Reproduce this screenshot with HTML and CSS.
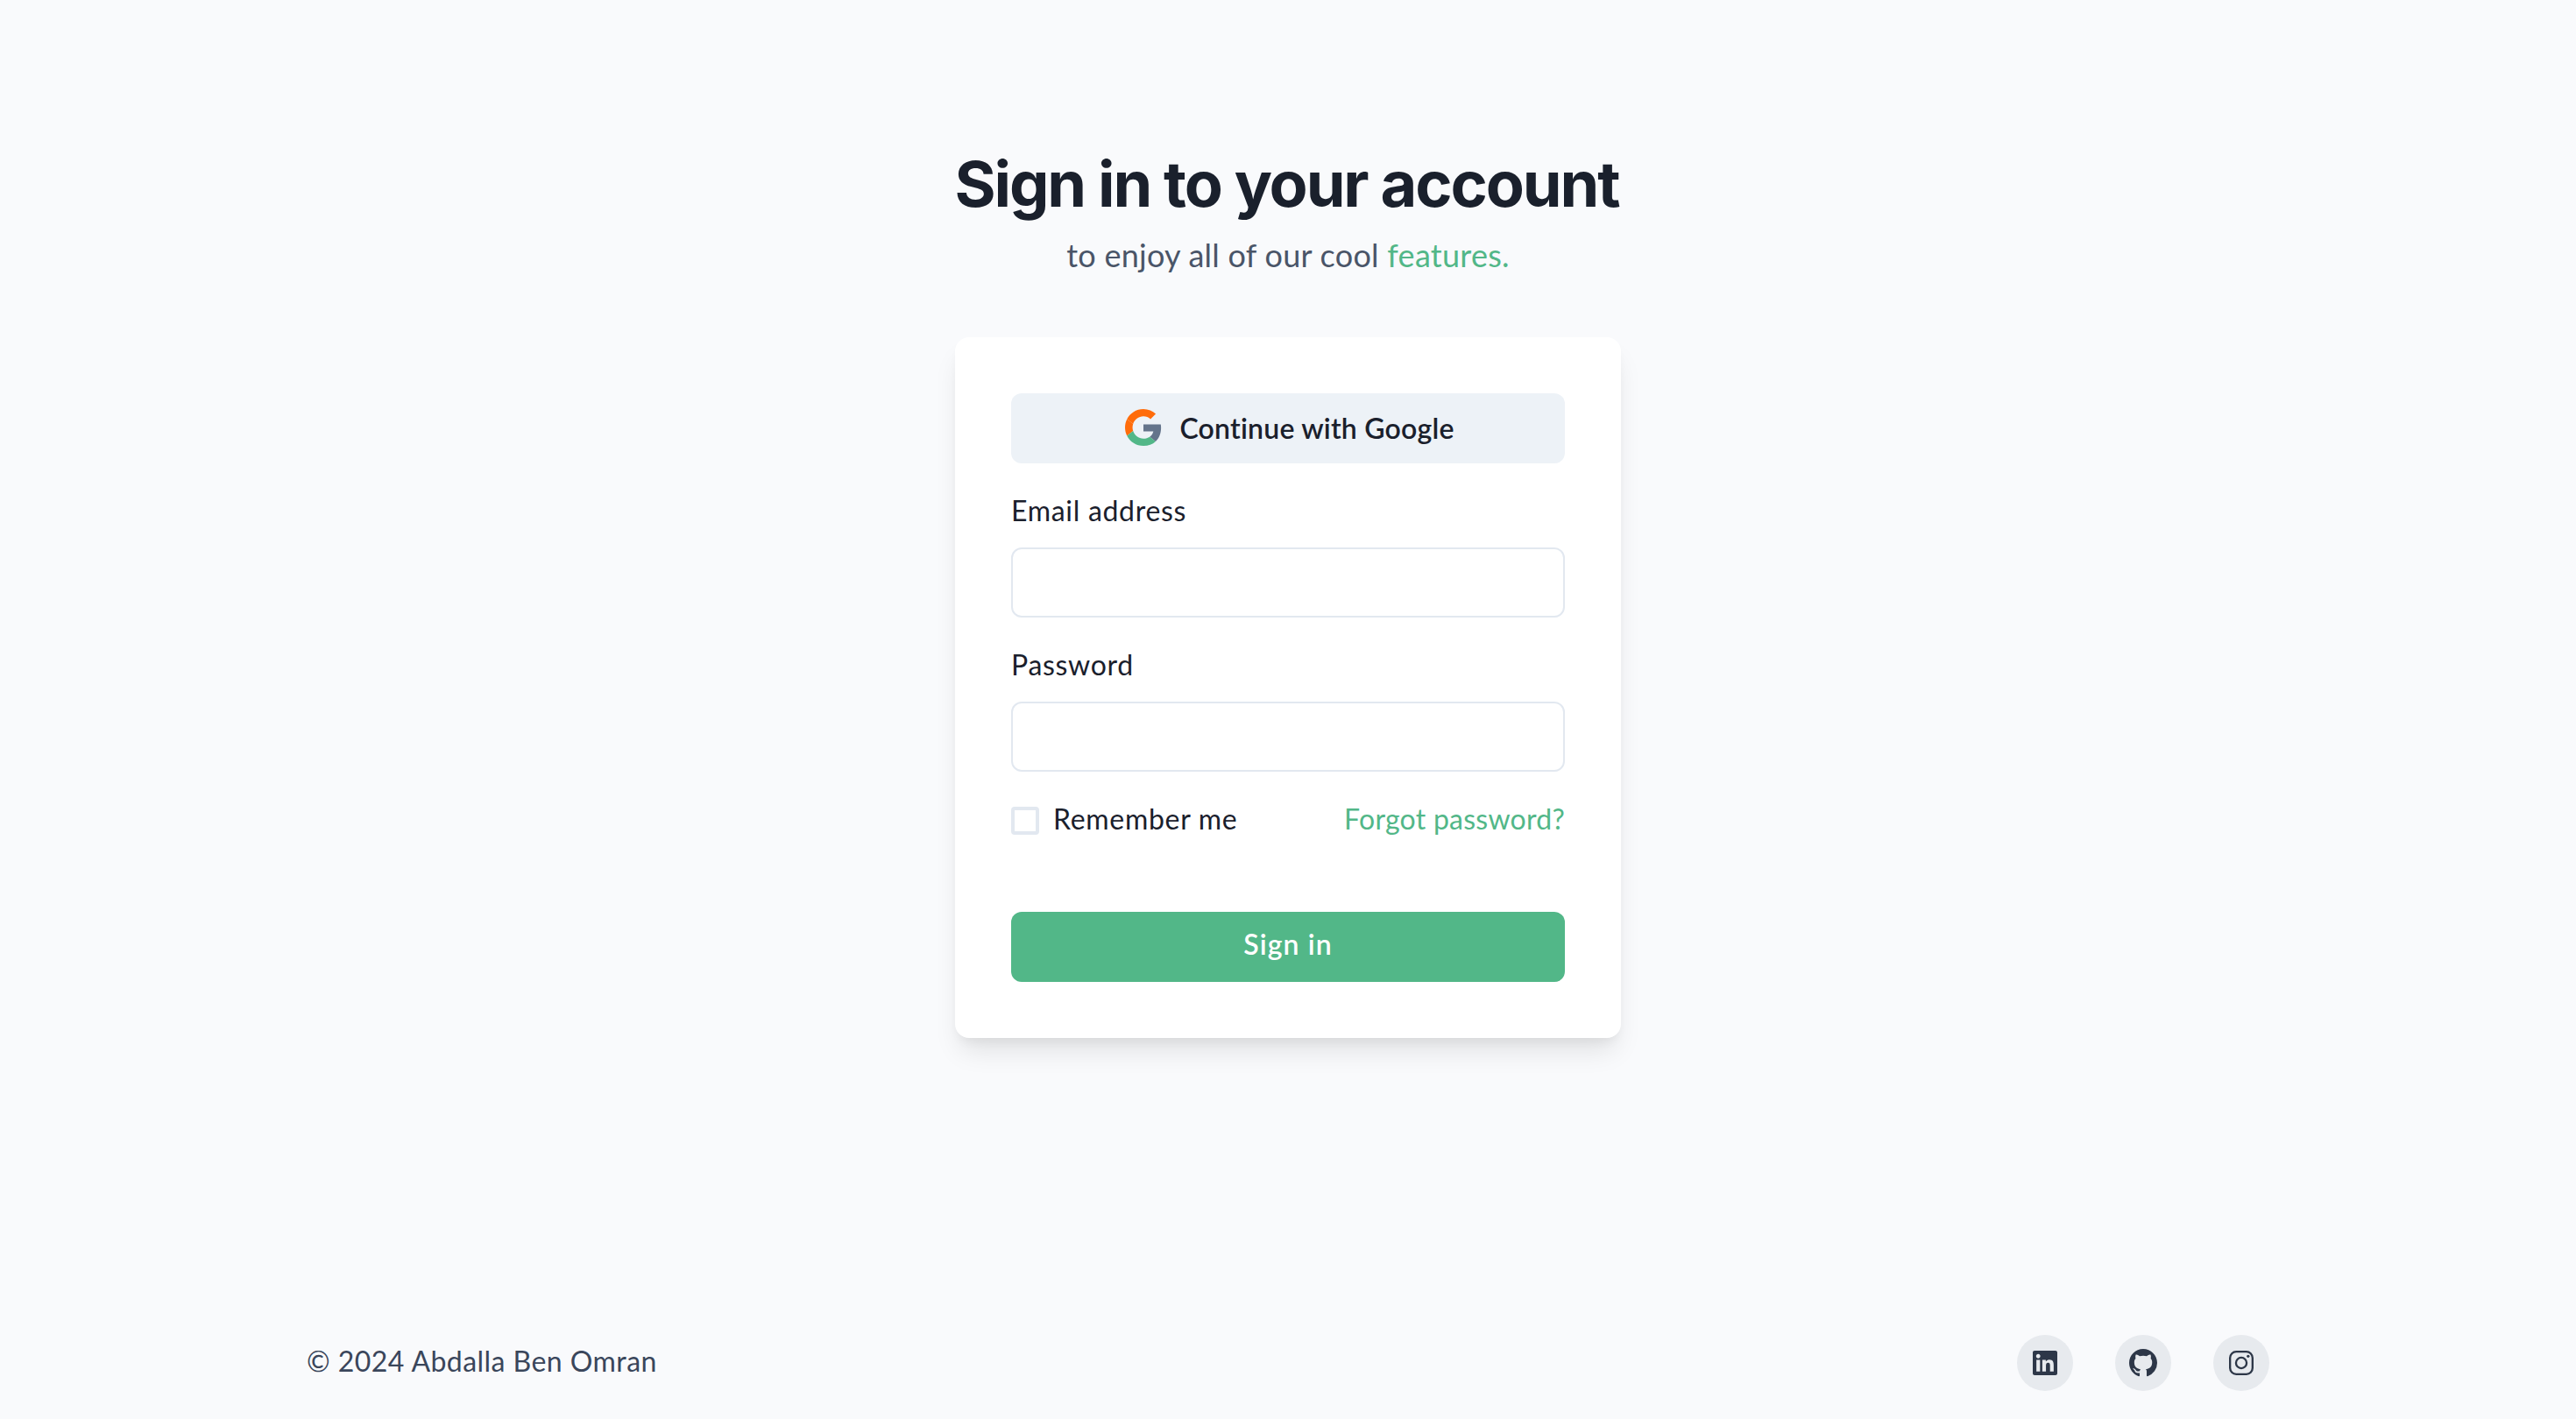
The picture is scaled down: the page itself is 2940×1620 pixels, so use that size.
FILE: index.html
```html
<!DOCTYPE html>
<html lang="en">
<head>
<meta charset="utf-8">
<title>Sign in</title>
<link rel="stylesheet" href="styles.css">
</head>
<body>
<main class="main">
  <header class="intro">
    <h1 class="title">Sign in to your account</h1>
    <p class="subtitle">to enjoy all of our cool <a class="link" href="#">features.</a></p>
  </header>
  <form class="card">
    <button type="button" class="btn btn-google">
      <svg class="google-icon" viewBox="0 0 48 48" aria-hidden="true">
        <path fill="#FF6C0A" d="M24 9.5c3.54 0 6.71 1.22 9.21 3.6l6.85-6.85C35.9 2.38 30.47 0 24 0 14.62 0 6.51 5.38 2.56 13.22l7.98 6.19C12.43 13.72 17.74 9.5 24 9.5z"/>
        <path fill="#64748B" d="M46.98 24.55c0-1.57-.15-3.09-.38-4.55H24v9.02h12.94c-.58 2.96-2.26 5.48-4.78 7.18l7.73 6c4.51-4.18 7.09-10.36 7.09-17.65z"/>
        <path fill="#FF6C0A" d="M10.53 28.59c-.48-1.45-.76-2.99-.76-4.59s.27-3.14.76-4.59l-7.98-6.19C.92 16.46 0 20.12 0 24c0 3.88.92 7.54 2.56 10.78l7.97-6.19z"/>
        <path fill="#52B788" d="M24 48c6.48 0 11.93-2.13 15.89-5.81l-7.73-6c-2.15 1.45-4.92 2.3-8.16 2.3-6.26 0-11.57-4.22-13.47-9.91l-7.98 6.19C6.51 42.62 14.62 48 24 48z"/>
      </svg>
      <span>Continue with Google</span>
    </button>
    <div class="field">
      <label class="label" for="email">Email address</label>
      <input class="input" id="email" type="email">
    </div>
    <div class="field">
      <label class="label" for="password">Password</label>
      <input class="input" id="password" type="password">
    </div>
    <div class="row">
      <label class="remember"><span class="checkbox"></span><span class="remember-text">Remember me</span></label>
      <a class="link row-link" href="#">Forgot password?</a>
    </div>
    <button type="button" class="btn btn-primary">Sign in</button>
  </form>
</main>
<footer class="footer">
  <p class="copyright">© 2024 Abdalla Ben Omran</p>
  <nav class="social">
    <a class="social-btn" href="#" aria-label="LinkedIn">
      <svg class="social-icon" viewBox="0 0 24 24"><path fill="currentColor" d="M20.447 20.452h-3.554v-5.569c0-1.328-.027-3.037-1.852-3.037-1.853 0-2.136 1.445-2.136 2.939v5.667H9.351V9h3.414v1.561h.046c.477-.9 1.637-1.85 3.37-1.85 3.601 0 4.267 2.37 4.267 5.455v6.286zM5.337 7.433c-1.144 0-2.063-.926-2.063-2.065 0-1.138.92-2.063 2.063-2.063 1.14 0 2.064.925 2.064 2.063 0 1.139-.925 2.065-2.064 2.065zm1.782 13.019H3.555V9h3.564v11.452zM22.225 0H1.771C.792 0 0 .774 0 1.729v20.542C0 23.227.792 24 1.771 24h20.451C23.2 24 24 23.227 24 22.271V1.729C24 .774 23.2 0 22.222 0h.003z"/></svg>
    </a>
    <a class="social-btn" href="#" aria-label="GitHub">
      <svg class="social-icon github" viewBox="0 0 16 16"><path fill="currentColor" d="M8 0C3.58 0 0 3.58 0 8c0 3.54 2.29 6.53 5.47 7.59.4.07.55-.17.55-.38 0-.19-.01-.82-.01-1.49-2.01.37-2.53-.49-2.69-.94-.09-.23-.48-.94-.82-1.13-.28-.15-.68-.52-.01-.53.63-.01 1.08.58 1.23.82.72 1.21 1.87.87 2.33.66.07-.52.28-.87.51-1.07-1.78-.2-3.64-.89-3.64-3.95 0-.87.31-1.59.82-2.15-.08-.2-.36-1.02.08-2.12 0 0 .67-.21 2.2.82.64-.18 1.32-.27 2-.27.68 0 1.36.09 2 .27 1.53-1.04 2.2-.82 2.2-.82.44 1.1.16 1.92.08 2.12.51.56.82 1.27.82 2.15 0 3.07-1.87 3.75-3.65 3.95.29.25.54.73.54 1.48 0 1.07-.01 1.93-.01 2.2 0 .21.15.46.55.38A8.013 8.013 0 0016 8c0-4.42-3.58-8-8-8z"/></svg>
    </a>
    <a class="social-btn" href="#" aria-label="Instagram">
      <svg class="social-icon" viewBox="0 0 24 24" fill="none" stroke="currentColor" stroke-width="2"><rect x="1" y="1" width="22" height="22" rx="6"/><circle cx="12" cy="12" r="5.2"/><circle cx="18.7" cy="5.4" r="1.4" fill="currentColor" stroke="none"/></svg>
    </a>
  </nav>
</footer>
</body>
</html>
```
FILE: styles.css
```css
* { box-sizing: border-box; }
html, body { margin: 0; height: 100%; }
body {
  display: flex;
  flex-direction: column;
  min-height: 1620px;
  background: #f9fafc;
  color: #1a202c;
  font-family: "Lato", "Open Sans", sans-serif;
  font-size: 32px;
  letter-spacing: 0.7px;
}
.main {
  flex: 1;
  display: flex;
  flex-direction: column;
  align-items: center;
  padding-top: 167px;
}
.intro { text-align: center; margin-bottom: 70px; }
.title {
  margin: 0;
  padding-right: 3px;
  font-family: "Inter", sans-serif;
  font-size: 72px;
  font-weight: 700;
  line-height: 86px;
  letter-spacing: -2.1px;
}
.subtitle {
  margin: 14px 0 0;
  line-height: 48px;
  font-size: 36px;
  letter-spacing: 0.26px;
  color: #4a5568;
}
.link { color: #52b788; text-decoration: none; }
.card {
  width: 760px;
  padding: 64px;
  display: flex;
  flex-direction: column;
  gap: 32px;
  background: #fff;
  border-radius: 16px;
  box-shadow: 0 20px 30px -6px rgba(0,0,0,.1), 0 8px 12px -4px rgba(0,0,0,.05);
}
.btn {
  height: 80px;
  border: 0;
  border-radius: 12px;
  font: inherit;
  letter-spacing: inherit;
  font-weight: 600;
  display: flex;
  align-items: center;
  justify-content: center;
}
.btn-google { gap: 20px; padding: 0 0 2px 4px; background: #edf2f7; color: #1a202c; letter-spacing: 0.22px; }
.google-icon { width: 42px; height: 42px; }
.btn-primary { margin-top: 48px; padding-bottom: 8px; background: #52b788; color: #fff; letter-spacing: 1.1px; }
.field { display: flex; flex-direction: column; gap: 20px; }
.label { line-height: 44px; }
.input {
  height: 80px;
  border: 2px solid #e2e8f0;
  border-radius: 12px;
  background: #fff;
}
.row {
  display: flex;
  justify-content: space-between;
  align-items: center;
  height: 48px;
}
.row-link { margin-bottom: 6px; letter-spacing: 0.25px; }
.remember { display: flex; align-items: center; gap: 16px; }
.remember-text { margin-bottom: 6px; }
.checkbox {
  width: 32px;
  height: 32px;
  border: 4px solid #e2e8f0;
  border-radius: 4px;
}
.footer {
  width: 2240px;
  margin: 0 auto;
  padding: 32px 0;
  display: flex;
  justify-content: space-between;
  align-items: center;
}
.copyright { margin: 0 0 6px; color: #3a465b; letter-spacing: 0.46px; }
.social { display: flex; gap: 48px; }
.social-btn {
  width: 64px;
  height: 64px;
  border-radius: 50%;
  display: flex;
  align-items: center;
  justify-content: center;
  background: #e7eaee;
  color: #2d3748;
}
.social-icon { width: 28px; height: 28px; }
.github { width: 32px; height: 32px; }
```
